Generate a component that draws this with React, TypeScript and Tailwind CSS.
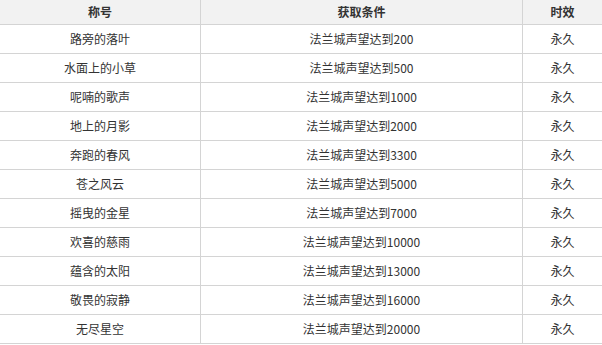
import React from 'react';

const rows: [string, string][] = [
  ['路旁的落叶', '法兰城声望达到200'],
  ['水面上的小草', '法兰城声望达到500'],
  ['呢喃的歌声', '法兰城声望达到1000'],
  ['地上的月影', '法兰城声望达到2000'],
  ['奔跑的春风', '法兰城声望达到3300'],
  ['苍之风云', '法兰城声望达到5000'],
  ['摇曳的金星', '法兰城声望达到7000'],
  ['欢喜的慈雨', '法兰城声望达到10000'],
  ['蕴含的太阳', '法兰城声望达到13000'],
  ['敬畏的寂静', '法兰城声望达到16000'],
  ['无尽星空', '法兰城声望达到20000'],
];

function App() {
  return (
    <div
      className="w-[602px] h-[345px] bg-white overflow-hidden text-[12px] text-[#333]"
      style={{ fontFamily: '"Noto Sans CJK SC", "Noto Sans", sans-serif' }}
    >
      <div className="flex h-[25px] bg-[#f2f2f2] border-b border-[#d4d4d4] font-bold">
        <div className="w-[201px] border-r border-[#d4d4d4] flex items-center justify-center">称号</div>
        <div className="w-[322px] border-r border-[#d4d4d4] flex items-center justify-center">获取条件</div>
        <div className="flex-1 flex items-center justify-center">时效</div>
      </div>
      {rows.map(([name, cond]) => (
        <div key={name} className="flex h-[29px] border-b border-[#d4d4d4]">
          <div className="w-[201px] border-r border-[#d4d4d4] flex items-center justify-center">{name}</div>
          <div className="w-[322px] border-r border-[#d4d4d4] flex items-center justify-center">{cond}</div>
          <div className="flex-1 flex items-center justify-center">永久</div>
        </div>
      ))}
    </div>
  );
}

export default App;
